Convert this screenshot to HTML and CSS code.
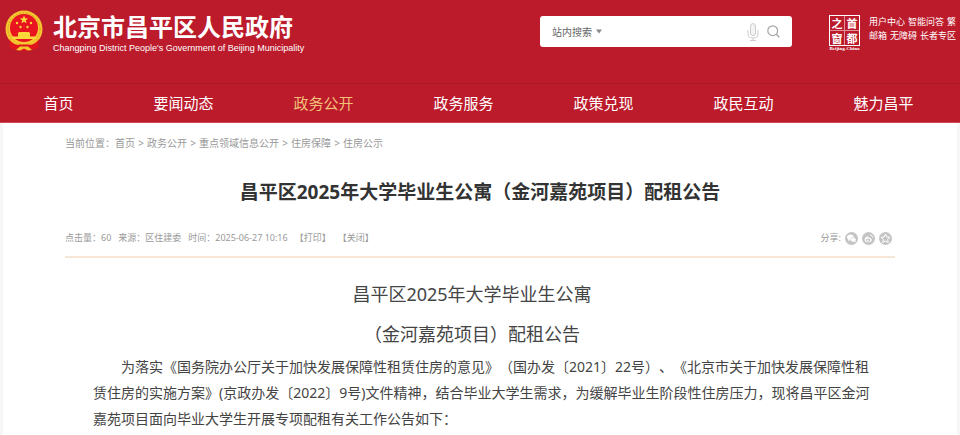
FILE: index.html
```html
<!DOCTYPE html>
<html lang="zh-CN">
<head>
<meta charset="utf-8">
<title>昌平区2025年大学毕业生公寓（金河嘉苑项目）配租公告</title>
<link rel="stylesheet" href="styles.css">
</head>
<body>
<header class="site-header">
  <div class="masthead">
    <a class="brand" href="#">
      <svg class="emblem" viewBox="0 0 38 42" aria-hidden="true">
        <path d="M5 27 L5 38 L10 39.500 L15 41 H23 L28 39.500 L33 38 L33 27 Z" fill="#e0161d"/>
        <circle cx="19" cy="19" r="18.500" fill="#f4c62f"/>
        <circle cx="19" cy="19" r="16" fill="none" stroke="#dc9c24" stroke-width="1" stroke-dasharray="2 1.500"/>
        <circle cx="19" cy="18" r="14" fill="#e8141f"/>
        <path d="M19 5.500l1.100 2.800 3 .2-2.300 1.900.8 2.900-2.600-1.600-2.600 1.600.8-2.900-2.300-1.900 3-.2z" fill="#fbd83a"/>
        <g fill="#fbd83a">
          <circle cx="12" cy="13" r="1.200"/><circle cx="26" cy="13" r="1.200"/>
          <circle cx="15.500" cy="17" r="1.200"/><circle cx="22.500" cy="17" r="1.200"/>
          <path d="M14 22h10l1.500 2H25v2.500h6v2.500H7v-2.500h6V24h-.5z"/>
        </g>
        <path d="M4 29q3 5 9 6l3-2h6l3 2q6-1 9-6l-1 8-8 1H13l-8-1z" fill="#e0161d"/>
        <path d="M8 30q5 0 7 2.500h8q2-2.500 7-2.500-2 4-7 4.500h-8q-5-.5-7-4.500z" fill="#f4c62f"/>
        <path d="M11 40l4-3.500h8l4 3.500-4 .5-4-2-4 2z" fill="#f4c62f"/>
      </svg>
      <span class="brand-text">
        <span class="brand-name">北京市昌平区人民政府</span>
        <span class="brand-en">Changping District People's Government of Beijing Municipality</span>
      </span>
    </a>
    <form class="search">
      <select class="search-scope" aria-label="搜索范围"><option>站内搜索</option></select>
      <svg class="caret" viewBox="0 0 6 5" aria-hidden="true"><path d="M0 .5h6L3 4.500z" fill="#888"/></svg>
      <input class="search-input" type="text" aria-label="搜索">
      <button class="icon-button" type="button" aria-label="语音">
        <svg class="mic" viewBox="0 0 12 18" fill="none" stroke="#ccc" aria-hidden="true"><rect x="3.500" y=".6" width="5" height="12" rx="2.500" fill="#f4f4f4"/><path d="M1 7v4q0 4 5 4t5-4V7M6 15v2.500M3 17.500h6"/></svg>
      </button>
      <button class="icon-button" type="submit" aria-label="搜索">
        <svg class="lens" viewBox="0 0 13 13" fill="none" stroke="#a6a6a6" aria-hidden="true"><circle cx="5.700" cy="5.700" r="4.900" stroke-width="1.200"/><path d="M9.300 9.300l3 3" stroke-width="1.400"/></svg>
      </button>
    </form>
    <div class="side">
      <a class="capital" href="#">
        <span class="seal"><span>之</span><span>首</span><span>窗</span><span>都</span></span>
        <span class="seal-caption">Beijing-China</span>
      </a>
      <div class="quick">
        <div class="quick-row"><a href="#">用户中心</a><a href="#">智能问答</a><a href="#">繁</a></div>
        <div class="quick-row"><a href="#">邮箱</a><a href="#">无障碍</a><a href="#">长者专区</a></div>
      </div>
    </div>
  </div>
  <nav class="nav">
    <a href="#">首页</a><a href="#">要闻动态</a><a class="active" href="#">政务公开</a><a href="#">政务服务</a><a href="#">政策兑现</a><a href="#">政民互动</a><a href="#">魅力昌平</a>
  </nav>
</header>
<main class="page">
  <div class="crumbs"><span>当前位置：</span><a href="#">首页</a><i>&gt;</i><a href="#">政务公开</a><i>&gt;</i><a href="#">重点领域信息公开</a><i>&gt;</i><a href="#">住房保障</a><i>&gt;</i><a href="#">住房公示</a></div>
  <h1 class="title">昌平区2025年大学毕业生公寓（金河嘉苑项目）配租公告</h1>
  <div class="meta">
    <span>点击量：60</span><span>来源：区住建委</span><span>时间：2025-06-27 10:16</span>
    <button type="button">【打印】</button><button type="button">【关闭】</button>
    <div class="share">
      <span>分享:</span>
      <a href="#" aria-label="微信"><svg viewBox="0 0 13 13"><circle cx="6.500" cy="6.500" r="6.500" fill="#c4c4c4"/><ellipse cx="5.400" cy="5.300" rx="3.300" ry="2.700" fill="#fff"/><path d="M3.500 7l-.5 2 2-1z" fill="#fff"/><ellipse cx="8.200" cy="7.700" rx="2.800" ry="2.200" fill="#fff" stroke="#c4c4c4" stroke-width=".5"/><path d="M9 9.500l1.500 1-.2-1.800z" fill="#fff"/></svg></a>
      <a href="#" aria-label="微博"><svg viewBox="0 0 13 13"><circle cx="6.500" cy="6.500" r="6.500" fill="#c4c4c4"/><path d="M5.800 4.200Q2.500 5.500 2.500 8q.5 2.300 3.700 2.300Q9.800 10 9.800 7.700q0-1-1.300-1.200.3-1.500-2-.8.200-1.500-.7-1.500z" fill="#fff"/><ellipse cx="6" cy="8" rx="2.300" ry="1.500" fill="#c4c4c4"/><circle cx="5.700" cy="8.200" r=".8" fill="#fff"/><path d="M8 3q2.800-.2 2.600 2.800" fill="none" stroke="#fff" stroke-width=".8"/></svg></a>
      <a href="#" aria-label="收藏"><svg viewBox="0 0 13 13"><circle cx="6.500" cy="6.500" r="6.500" fill="#c4c4c4"/><path d="M6.500 2l1.300 3 3.200.3-2.400 2.100.7 3.200-2.800-1.700-2.800 1.700.7-3.200L2 5.300 5.200 5z" fill="#c4c4c4" stroke="#fff" stroke-width="1"/></svg></a>
    </div>
  </div>
  <article class="content">
    <h2>昌平区2025年大学毕业生公寓<br>（金河嘉苑项目）配租公告</h2>
    <p>为落实《国务院办公厅关于加快发展保障性租赁住房的意见》（国办发〔2021〕22号）、《北京市关于加快发展保障性租赁住房的实施方案》(京政办发〔2022〕9号)文件精神，结合毕业大学生需求，为缓解毕业生阶段性住房压力，现将昌平区金河嘉苑项目面向毕业大学生开展专项配租有关工作公告如下：</p>
  </article>
</main>
</body>
</html>
```
FILE: styles.css
```css
* { box-sizing: border-box; }
body {
  margin: 0;
  background: #f6f6f6;
  color: #444;
  font-family: "Noto Sans", "Noto Sans CJK SC", sans-serif;
  text-spacing-trim: space-all;
}
a { color: inherit; text-decoration: none; }
button { border: 0; padding: 0; background: none; color: inherit; font: inherit; }
svg { display: block; }

.site-header { background: #bc1b2c; color: #fff; border-bottom: 1px solid #cf4a57; }
.masthead {
  display: flex;
  height: 84px;
  padding: 10px 4px 0 5px;
  border-bottom: 1px solid #a81a29;
}
.brand { display: flex; gap: 10px; flex: 0 0 535px; }
.emblem { width: 38px; height: 42px; }
.brand-text { display: flex; flex-direction: column; }
.brand-name { font: bold 24px/32px "Noto Sans CJK SC", sans-serif; }
.brand-en { font: 9px/12px "Liberation Sans", sans-serif; white-space: nowrap; }

.search {
  display: flex;
  align-items: center;
  flex: 0 1 252px;
  min-width: 0;
  height: 31px;
  margin-top: 6px;
  padding: 0 12px;
  background: #fff;
  border-radius: 3px;
}
.search-scope {
  appearance: none;
  border: 0;
  padding: 0;
  background: none;
  color: #666;
  font: 10px/16px "Noto Sans CJK SC", sans-serif;
}
.caret { flex: none; width: 6px; height: 5px; margin-left: 4px; }
.search-input { flex: 1; width: 0; min-width: 0; border: 0; outline: 0; background: none; }
.icon-button { flex: none; margin-left: 8px; }
.mic { width: 12px; height: 18px; }
.lens { width: 13px; height: 13px; }

.side { display: flex; gap: 9px; margin-left: auto; }
.capital { display: flex; flex-direction: column; align-items: center; padding-top: 5px; }
.seal {
  display: grid;
  grid-template-columns: 1fr 1fr;
  gap: 1px;
  width: 31px;
  border: 1px solid #fff;
  background: #e0909a;
  font: bold 11px/14px "Noto Sans CJK SC", serif;
  text-align: center;
}
.seal span { background: #bc1b2c; }
.seal-caption { font: bold 5px/6px "Liberation Serif", serif; }
.quick { padding-top: 5px; font-size: 9px; line-height: 14px; white-space: nowrap; }
.quick-row { display: flex; justify-content: space-between; gap: 3px; }

.nav { display: flex; justify-content: center; font-size: 15px; line-height: 38px; padding-right: 3px; }
.nav a { padding: 0 40px; white-space: nowrap; }
.nav .active { color: #f2c078; }

.page { margin: 0 3px; padding: 12px 62px 0; background: #fff; min-height: calc(100vh - 123px); }
.crumbs { display: flex; color: #999; font-size: 10px; line-height: 16px; }
.crumbs i { width: 12px; text-align: center; font-style: normal; }
.title { margin: 26px 0 0; color: #333; font-size: 19px; line-height: 30px; text-align: center; }
.meta {
  display: flex;
  align-items: center;
  gap: 7px;
  margin-top: 23px;
  padding-bottom: 10px;
  border-bottom: 2px solid #f7e6d6;
  color: #999;
  font-size: 9px;
  line-height: 16px;
}
.share { display: flex; align-items: center; gap: 4px; margin-left: auto; padding-right: 3px; }
.share svg { width: 13px; height: 13px; }

.content { padding: 16px 20px 0 28px; }
.content h2 { margin: 0 24px 0 0; font-size: 18px; font-weight: normal; line-height: 40px; text-align: center; }
.content p { margin: 0; font-size: 14px; line-height: 26px; text-indent: 28px; }
```
